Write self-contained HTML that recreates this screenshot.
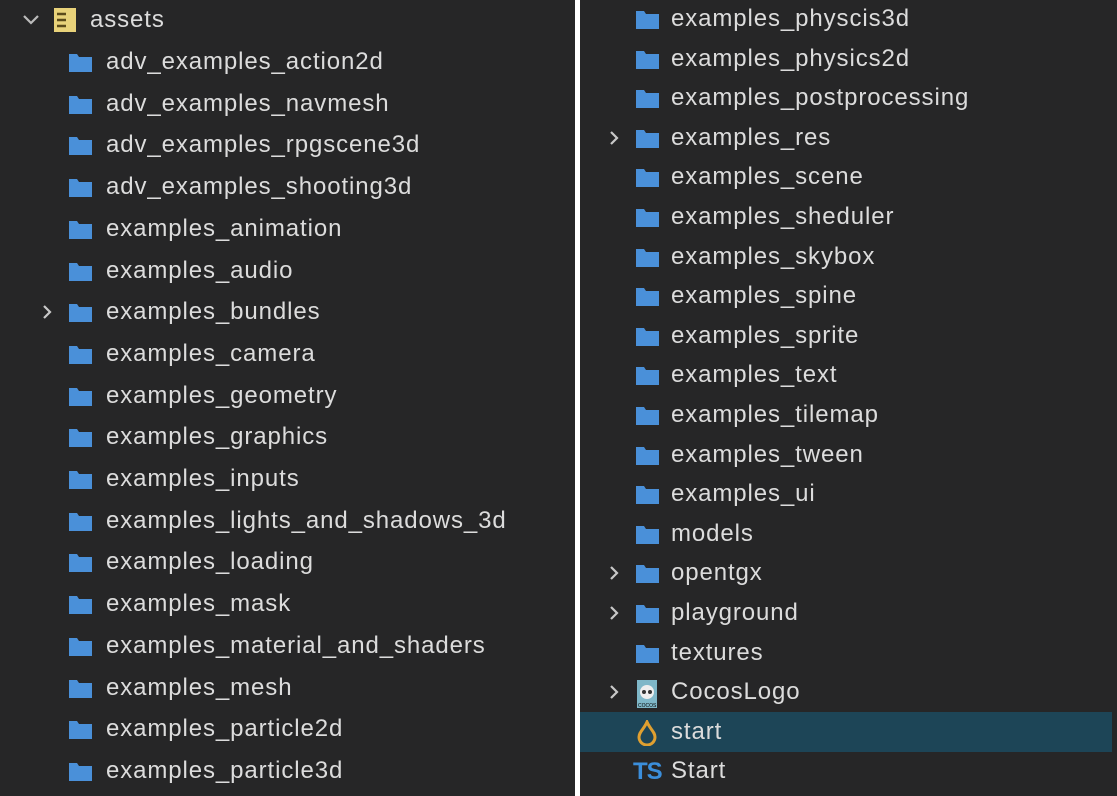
<!DOCTYPE html><html><head><style>
body{margin:0;width:1117px;height:796px;background:#fff;position:relative;overflow:hidden;font-family:"Liberation Sans",sans-serif;}
.p{position:absolute;top:0;height:796px;background:#262627}
.r{position:absolute;color:#dcdcdc;font-size:24px;letter-spacing:0.9px;line-height:30px;white-space:nowrap}
.f{position:absolute;width:25px;height:21px}
.c{position:absolute;width:14px;height:18px}
</style></head><body>
<div class="p" style="left:0;width:575px"></div>
<div class="p" style="left:580px;width:537px"></div>
<div style="position:absolute;left:580px;top:712px;width:532px;height:40px;background:#1d4557"></div>
<svg width="0" height="0" style="position:absolute"><defs><symbol id="fd" viewBox="0 0 25 21"><path d="M1 2h8l2 3h13v15H1z" fill="#4a90d9"/></symbol><symbol id="ch" viewBox="0 0 14 18"><path d="M4 3l6 6-6 6" stroke="#c8c8c8" stroke-width="2.2" fill="none"/></symbol></defs></svg>
<svg style="position:absolute;left:22px;top:12px" width="18" height="14"><path d="M2 4l7 7 7-7" stroke="#bbb" stroke-width="2.2" fill="none"/></svg>
<svg style="position:absolute;left:54px;top:8px" width="22" height="24"><rect x="0" y="0" width="22" height="24" fill="#e8d27a"/><path d="M3 6h9M3 12h9M3 18h9" stroke="#5a4a1a" stroke-width="2.5"/></svg>
<div class="r" style="left:90px;top:5px">assets</div>
<div id="L"></div><div id="R"></div>
<svg style="position:absolute;left:637px;top:680px" width="20" height="28"><rect width="20" height="28" fill="#7fb7c8"/><circle cx="10" cy="12" r="7" fill="#eee"/><circle cx="7" cy="12" r="2" fill="#333"/><circle cx="13" cy="12" r="2" fill="#333"/><text x="1" y="27" font-size="5" fill="#000" font-family="Liberation Sans">COCOS</text></svg>
<svg style="position:absolute;left:636px;top:720px" width="22" height="26"><path d="M11 2C8 9 3 12 3 17a8 8 0 0016 0c0-5-5-8-8-15z" fill="none" stroke="#e0a030" stroke-width="3"/></svg>
<div style="position:absolute;left:633px;top:758px;color:#3b8edb;font-weight:bold;font-size:24px;letter-spacing:-1px">TS</div>
<script>
var L=["adv_examples_action2d","adv_examples_navmesh","adv_examples_rpgscene3d","adv_examples_shooting3d","examples_animation","examples_audio","examples_bundles","examples_camera","examples_geometry","examples_graphics","examples_inputs","examples_lights_and_shadows_3d","examples_loading","examples_mask","examples_material_and_shaders","examples_mesh","examples_particle2d","examples_particle3d"];
var h="";
L.forEach(function(t,i){var y=62+i*41.7;h+='<svg class="f" style="left:68px;top:'+(y-10)+'px"><use href="#fd"/></svg><div class="r" style="left:106px;top:'+(y-15)+'px">'+t+'</div>';if(t=="examples_bundles")h+='<svg class="c" style="left:40px;top:'+(y-9)+'px"><use href="#ch"/></svg>';});
document.getElementById("L").innerHTML=h;
var R=["examples_physcis3d","examples_physics2d","examples_postprocessing","examples_res","examples_scene","examples_sheduler","examples_skybox","examples_spine","examples_sprite","examples_text","examples_tilemap","examples_tween","examples_ui","models","opentgx","playground","textures","CocosLogo","start","Start"];
var ar={"examples_res":1,"opentgx":1,"playground":1,"CocosLogo":1};
h="";
R.forEach(function(t,i){var y=19+i*39.6;if(i<17)h+='<svg class="f" style="left:635px;top:'+(y-10)+'px"><use href="#fd"/></svg>';h+='<div class="r" style="left:671px;top:'+(y-15)+'px">'+t+'</div>';if(ar[t])h+='<svg class="c" style="left:607px;top:'+(y-9)+'px"><use href="#ch"/></svg>';});
document.getElementById("R").innerHTML=h;
</script>
</body></html>
